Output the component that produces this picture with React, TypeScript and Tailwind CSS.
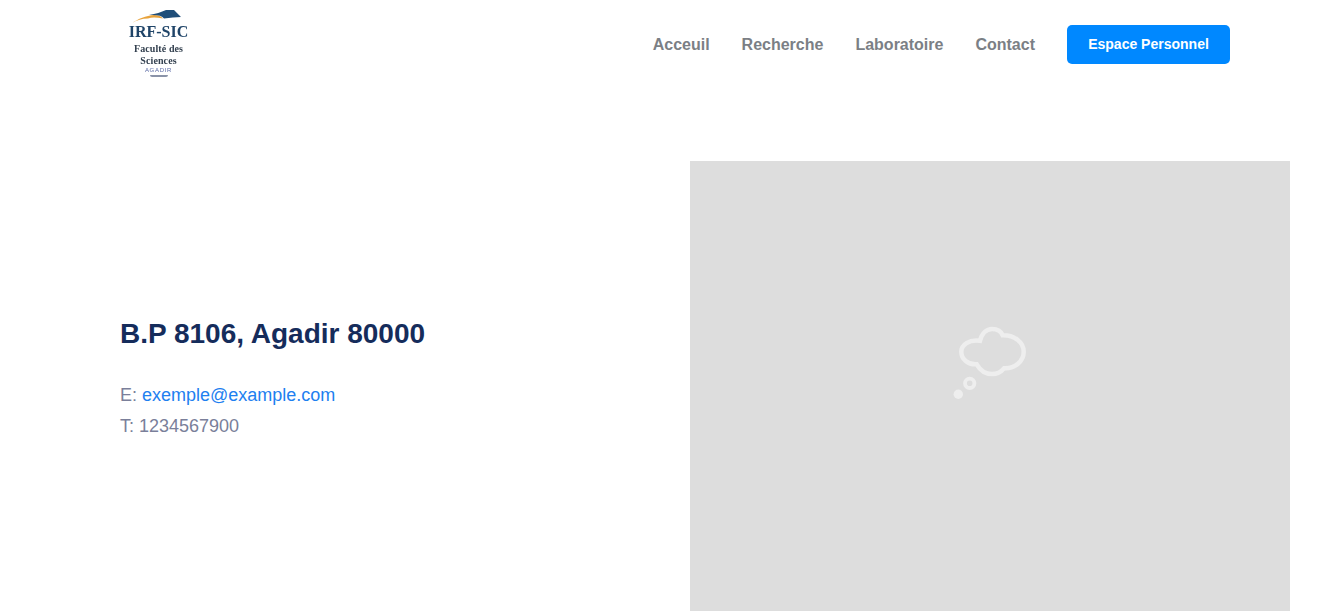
export default function App() {
  const links = ["Acceuil", "Recherche", "Laboratoire", "Contact"];
  return (
    <div className="h-[612px] w-full overflow-hidden bg-white font-['Liberation_Sans',Arial,sans-serif]">
      <header className="flex h-[89px] items-center justify-between pl-[120px] pr-[111px]">
        <div className="flex h-[89px] w-[77px] flex-col items-center blur-[0.4px]">
          <svg width="70" height="19" viewBox="0 0 70 19" className="mt-[5px] shrink-0">
            <path d="M8 18 C14 14 22 10.5 30 10 C34 10 37 11 39 13.5 C33 12.5 28 12 24 13.5 C18 13.5 13 15 8 18Z" fill="#e8a33c" />
            <path d="M25 10 C32 9 37 7 42 5 L50 5 L57 12 C52 12.5 46 12.5 40 13.5 C38 10.5 33 9.5 25 10Z" fill="#1f4e79" />
          </svg>
          <div className="font-['Liberation_Serif',serif] text-[16px] font-bold leading-[16px] text-[#1f4468]">IRF-SIC</div>
          <div className="mt-[3px] font-['Liberation_Serif',serif] text-[10px] font-bold leading-[12px] tracking-[0.1px] text-[#33404f]">Faculté des</div>
          <div className="font-['Liberation_Serif',serif] text-[10px] font-bold leading-[11px] tracking-[0.1px] text-[#33404f]">Sciences</div>
          <div className="text-[6px] leading-[8px] tracking-[0.7px] text-[#5a6aa5]">AGADIR</div>
          <div className="mt-[1px] h-[2px] w-[18px] rounded-b-full bg-[#8a93a8]" />
        </div>
        <nav className="flex items-center">
          {links.map((l) => (
            <a key={l} className="mr-8 text-[16px] font-bold text-[#7b7f85]">{l}</a>
          ))}
          <a className="flex h-[39px] w-[163px] items-center justify-center rounded-[5px] bg-[#0088ff] text-[14px] font-bold text-white">
            Espace Personnel
          </a>
        </nav>
      </header>
      <main className="mt-[72px] flex items-center justify-between pl-[120px] pr-[51px]">
        <div className="mb-[13px]">
          <h2 className="text-[28px] font-bold leading-[32px] text-[#152c5b]">B.P 8106, Agadir 80000</h2>
          <p className="mt-[30px] text-[18px] leading-[31px] text-[#7a7f9a]">
            E: <a className="text-[#1e80f0]">exemple@example.com</a>
          </p>
          <p className="text-[18px] leading-[31px] text-[#7a7f9a]">T: 1234567900</p>
        </div>
        <div className="flex h-[450px] w-[600px] items-center justify-center bg-[#dddddd]">
          <svg width="110" height="100" viewBox="0 0 110 100" className="mb-[52px] mr-[10px]" fill="none">
            <path
              d="M50 30.7 C52 23 57 19 62 19 C67 19 71 21 72.7 25.3 C84 25 93.7 32 93.7 41.7 C93.7 51 85 59 74 58.3 C71 62 67 64 62 64 C55 64 50 60 46.7 54.3 C38 55 31.3 49 31.3 41.7 C31.3 35 39 29 50 30.7Z"
              stroke="#eeeeee"
              strokeWidth="4.5"
            />
            <circle cx="39.7" cy="73.3" r="4.7" stroke="#eeeeee" strokeWidth="3.8" />
            <circle cx="28.3" cy="84.3" r="4.7" fill="#eeeeee" />
          </svg>
        </div>
      </main>
    </div>
  );
}
